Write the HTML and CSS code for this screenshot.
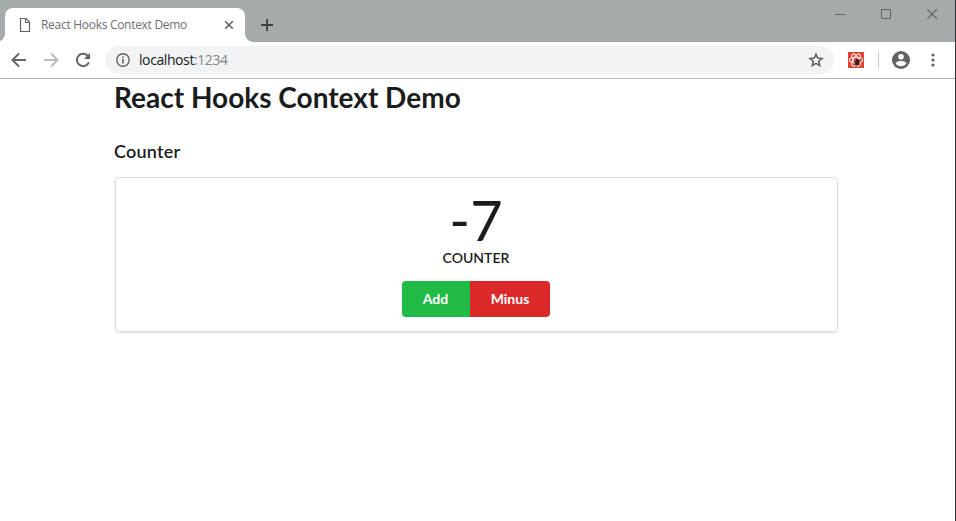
FILE: index.html
```html
<!DOCTYPE html>
<html lang="en">
<head>
<meta charset="utf-8">
<title>React Hooks Context Demo</title>
<link rel="stylesheet" href="styles.css">
</head>
<body>
<div class="window">
  <header class="titlebar">
    <div class="tab">
      <svg class="tab-icon" width="12" height="16" viewBox="0 0 12 16"><path d="M1.5 1.5h5.500l3.500 3.500v9.500h-9zM6.500 1.500v4h4" fill="none" stroke="#5f6368" stroke-width="1.200"/></svg>
      <span class="tab-title">React Hooks Context Demo</span>
      <svg class="tab-close" width="10" height="10" viewBox="0 0 10 10"><path d="M1.200 1.200l7.600 7.600M8.800 1.200l-7.600 7.600" stroke="#5f6368" stroke-width="1.600"/></svg>
    </div>
    <svg class="new-tab" width="12" height="12" viewBox="0 0 12 12"><path d="M6 0v12M0 6h12" stroke="#3c4043" stroke-width="1.800"/></svg>
    <div class="controls">
      <svg width="11" height="11" viewBox="0 0 11 11"><path d="M0 5.500h10.500" stroke="#666a6c"/></svg>
      <svg width="11" height="11" viewBox="0 0 11 11"><path d="M.5 .5h9v9h-9z" fill="none" stroke="#5f6365"/></svg>
      <svg width="11" height="11" viewBox="0 0 11 11"><path d="M.2 .2l9.800 9.800M10 .2L.2 10" stroke="#5f6365" stroke-width="1.100"/></svg>
    </div>
  </header>
  <nav class="toolbar">
    <svg class="nav" width="20" height="20" viewBox="0 0 24 24"><path d="M20.500 10.800H7l5.800-5.800L11.200 3.300 2.500 12l8.700 8.700 1.600-1.700L7 13.200h13.500z" fill="#5f6368"/></svg>
    <svg class="nav" width="20" height="20" viewBox="0 0 24 24"><path d="M3.500 10.800H17l-5.800-5.800 1.600-1.700L21.500 12l-8.700 8.700-1.600-1.700 5.800-5.800H3.500z" fill="#babcbe"/></svg>
    <svg class="nav" width="20" height="20" viewBox="0 0 24 24"><path d="M18.200 5.800A8.600 8.600 0 1 0 20.300 14.600h-2.600a6.200 6.200 0 1 1-1.300-7.100L13.300 10.700H20.500V3.500z" fill="#5f6368"/></svg>
    <div class="address">
      <svg width="14" height="14" viewBox="0 0 14 14"><circle cx="7" cy="7" r="6.200" fill="none" stroke="#5f6368" stroke-width="1.400"/><path d="M7 6v4.500M7 3.500v1.500" stroke="#5f6368" stroke-width="1.600"/></svg>
      <span class="url">localhost<span class="port">:1234</span></span>
      <svg class="star" width="16" height="16" viewBox="0 0 16 16"><path d="M8 2.200l1.700 3.900 4.300.4-3.300 2.900 1 4.200L8 11.400l-3.700 2.200 1-4.200L2 6.500l4.300-.4z" fill="none" stroke="#5f6368" stroke-width="1.600"/></svg>
    </div>
    <svg class="extension" width="16" height="16" viewBox="0 0 16 16"><path d="M0 0h16v16H0z" fill="#dc4435"/><g fill="none" stroke="#fbe3e0" stroke-width="1.100"><ellipse cx="8" cy="8" rx="6.700" ry="2.800"/><ellipse cx="8" cy="8" rx="6.700" ry="2.800" transform="rotate(60 8 8)"/><ellipse cx="8" cy="8" rx="6.700" ry="2.800" transform="rotate(120 8 8)"/></g><ellipse cx="9.300" cy="10.400" rx="2.200" ry="3.300" transform="rotate(25 9.300 10.400)" fill="#3a1c19"/><path d="M5.500 9.500l6 3.500M6.500 13l5.500-5.500M8 7l1.500 2" stroke="#3a1c19" stroke-width=".9"/></svg>
    <span class="divider"></span>
    <svg class="profile" width="18" height="18" viewBox="0 0 18 18"><circle cx="9" cy="9" r="9" fill="#5f6368"/><circle cx="9" cy="5.800" r="2.800" fill="#fff"/><path d="M3.500 12.300c1-1.700 3.400-2.300 5.500-2.300s4.500.6 5.500 2.300a6.500 6.500 0 0 1-11 0z" fill="#fff"/></svg>
    <svg class="menu" width="4" height="14" viewBox="0 0 4 14"><g fill="#5f6368"><circle cx="2" cy="2" r="1.600"/><circle cx="2" cy="7" r="1.600"/><circle cx="2" cy="12" r="1.600"/></g></svg>
  </nav>
  <main class="container">
    <h1>React Hooks Context Demo</h1>
    <h3>Counter</h3>
    <section class="segment">
      <div class="value">-7</div>
      <div class="label">Counter</div>
      <div class="buttons"><button class="add">Add</button><button class="minus">Minus</button></div>
    </section>
  </main>
</div>
</body>
</html>
```
FILE: styles.css
```css
* { box-sizing: border-box; }
body { margin: 0; background: #fff; overflow: hidden; }
svg { display: block; flex: none; }
.window { height: 521px; border-right: 1px solid #333; background: #fff; }
.titlebar { display: flex; height: 42px; background: #a5aaad; padding: 8px 17px 0 5px; }
.tab { position: relative; display: flex; align-items: center; width: 240px; height: 34px; padding: 0 11px 0 14px; border-radius: 8px 8px 0 0; background: #fff; }
.tab::before, .tab::after { content: ""; position: absolute; bottom: 0; width: 8px; height: 8px; }
.tab::before { left: -8px; background: radial-gradient(circle at 0 0, transparent 7.500px, #fff 8px); }
.tab::after { right: -8px; background: radial-gradient(circle at 100% 0, transparent 7.500px, #fff 8px); }
.tab-title { margin-left: 10px; font: 12px/16px "Open Sans", "Noto Sans", sans-serif; letter-spacing: -0.290px; color: #6b6f73; white-space: nowrap; }
.tab-close { margin-left: auto; }
.new-tab { margin: 11px 0 0 16px; }
.controls { display: flex; gap: 35px; margin: 1px 0 0 auto; }
.toolbar { display: flex; align-items: center; height: 37px; padding: 0 20px 0 9px; border-bottom: 1px solid #b4b5b6; }
.nav { margin-right: 12px; }
.address { display: flex; align-items: center; width: 729px; height: 28px; padding: 0 10px 0 11px; border-radius: 14px; background: #f1f3f4; }
.url { margin-left: 9px; font: 14px/20px "Open Sans", "Noto Sans", sans-serif; letter-spacing: -0.410px; color: #202124; }
.port { color: #80868b; }
.star { margin-left: auto; }
.extension { margin-left: 14px; }
.divider { width: 1px; height: 16px; margin-left: 14px; background: #c9cbcd; }
.profile { margin-left: 13px; }
.menu { margin-left: auto; }
.container { width: 723px; margin-left: 115px; font-family: Lato, sans-serif; color: #1b1c1d; }
h1 { margin: 0 0 0 -1px; font-size: 28px; line-height: 36px; font-weight: 700; }
h3 { margin: 25px 0 0 -1px; font-size: 18px; line-height: 23px; font-weight: 600; letter-spacing: .2px; }
.segment { height: 155px; margin-top: 14px; padding: 14px 2px 0 0; border: 1px solid #dededf; border-radius: 4px; box-shadow: 0 1px 2px rgba(34, 36, 38, .15); text-align: center; }
.value { font-size: 56px; line-height: 56px; padding-left: 1px; }
.label { padding-left: 1px; font-size: 14px; line-height: 20px; font-weight: 600; text-transform: uppercase; }
.buttons { display: flex; justify-content: center; margin-top: 13px; }
button { height: 36px; padding: 0; border: 0; color: #fff; font: 700 14px/14px Lato, sans-serif; }
.add { width: 68px; border-radius: 4px 0 0 4px; background: #21ba45; }
.minus { width: 80px; padding-left: 1px; border-radius: 0 4px 4px 0; background: #db2828; }
```
